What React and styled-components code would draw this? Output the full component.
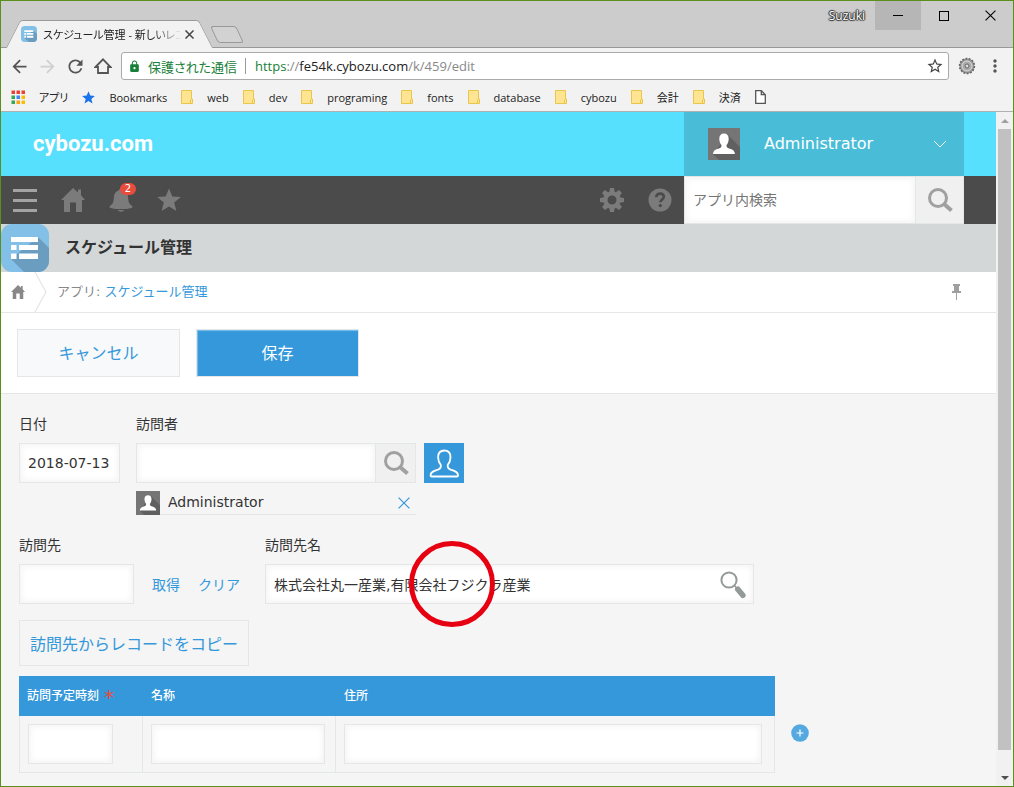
import React from 'react';
import styled, { createGlobalStyle } from 'styled-components';
import {
  MdArrowBack,
  MdArrowForward,
  MdRefresh,
  MdLock,
  MdStarBorder,
  MdMoreVert,
} from 'react-icons/md';

const appFont = '"DejaVu Sans", "Noto Sans CJK JP", sans-serif';
const chromeFont = '"Open Sans", "Noto Sans CJK JP", sans-serif';

const GlobalStyle = createGlobalStyle`
  * {
    box-sizing: border-box;
  }
  body {
    margin: 0;
    font-family: ${appFont};
    font-size: 14px;
    color: #333;
  }
  button, input {
    margin: 0;
    padding: 0;
    border: 0;
    background: none;
    font-family: inherit;
    font-size: inherit;
    color: inherit;
  }
  a {
    color: #3498db;
    text-decoration: none;
  }
  svg {
    display: block;
    flex: none;
  }
`

/* browser window */
const WindowStyled = styled.div`
  display: flex;
  flex-direction: column;
  min-height: 100vh;
  border: 1px solid #5a8f1c;
  background-color: #f2f2f2;
`
const TitleBarStyled = styled.div`
  display: flex;
  height: 47px;
  padding-left: 12px;
  border-bottom: 1px solid #999;
  background-color: #ccc;
  font-family: ${chromeFont};
  font-size: 12px;
`
const TabStyled = styled.div`
  position: relative;
  z-index: 0;
  display: flex;
  align-items: center;
  align-self: flex-end;
  width: 193px;
  height: 28px;
  margin-bottom: -1px;
  padding: 0 12px 0 8px;
  &::before, &::after {
    content: '';
    position: absolute;
    z-index: -1;
    top: 0;
    bottom: 0;
    border-top: 1px solid #999;
    background-color: #f2f2f2;
  }
  &::before {
    left: 0;
    right: 50%;
    border-left: 1px solid #999;
    border-top-left-radius: 3px;
    transform: skewX(-27deg);
  }
  &::after {
    left: 40%;
    right: 0;
    border-right: 1px solid #999;
    border-top-right-radius: 3px;
    transform: skewX(27deg);
  }
`
const TabTitleStyled = styled.span`
  flex: 1;
  overflow: hidden;
  margin: 0 4px 0 6px;
  color: #222;
  font-size: 11px;
  font-feature-settings: 'palt';
  white-space: nowrap;
  mask-image: linear-gradient(to right, #000 80%, transparent);
`
const TabCloseStyled = styled.button`
  color: #444;
`
const NewTabStyled = styled.button`
  align-self: flex-end;
  width: 26px;
  height: 17px;
  margin: 0 0 4px 8px;
  border: 1px solid #999;
  border-radius: 3px;
  background-color: #d2d2d2;
  transform: skewX(25deg);
`
const WindowControlsStyled = styled.div`
  display: flex;
  align-items: flex-start;
  margin-left: auto;
`
const ProfileStyled = styled.span`
  margin-right: 10px;
  color: #fff;
  line-height: 30px;
  text-shadow: 0 0 1px #333, 1px 0 1px #333, -1px 0 1px #333, 0 1px 1px #333, 0 -1px 1px #333;
`
const WindowButtonStyled = styled.button`
  display: flex;
  align-items: center;
  justify-content: center;
  width: 46px;
  height: 29px;
  background-color: ${({ $active }) => ($active ? '#b6b6b6' : 'transparent')};
`
const ToolbarStyled = styled.div`
  display: flex;
  align-items: center;
  gap: 8px;
  padding: 4px 8px 0;
  color: #555;
  font-family: ${chromeFont};
`
const ToolButtonStyled = styled.button`
  display: flex;
  justify-content: center;
  width: 20px;
  color: ${({ $disabled }) => ($disabled ? '#d0d0d0' : '#555')};
`
const AddressStyled = styled.div`
  display: flex;
  flex: 1;
  align-items: center;
  height: 28px;
  padding: 0 4px 0 6px;
  border: 1px solid #aaa;
  border-radius: 3px;
  background-color: #fff;
  color: #888;
  font-size: 13px;
`
const SecureStyled = styled.span`
  display: flex;
  align-items: center;
  gap: 7px;
  height: 16px;
  margin-right: 9px;
  padding-right: 8px;
  border-right: 1px solid #999;
  color: #188038;
  font-feature-settings: 'palt';
`
const UrlStyled = styled.span`
  flex: 1;
  b {
    color: #222;
    font-weight: 400;
  }
  i {
    color: #188038;
    font-style: normal;
  }
`
const BookmarkBarStyled = styled.div`
  display: flex;
  align-items: center;
  gap: 14px;
  height: 32px;
  padding: 3px 10px 0;
  border-bottom: 1px solid #b0b0b0;
  font-family: ${chromeFont};
  font-size: 11px;
`
const BookmarkStyled = styled.a`
  display: flex;
  align-items: center;
  gap: 14px;
  color: #222;
  font-feature-settings: 'palt';
  white-space: nowrap;
`
const ViewportStyled = styled.div`
  display: flex;
  flex: 1;
`
const PageStyled = styled.main`
  display: flex;
  flex: 1;
  flex-direction: column;
  min-width: 0;
`
const ScrollBarStyled = styled.div`
  display: flex;
  flex-direction: column;
  align-items: center;
  width: 17px;
  background-color: #f1f1f1;
`
const ScrollArrowStyled = styled.div`
  display: flex;
  align-items: center;
  justify-content: center;
  height: 17px;
`
const ScrollThumbStyled = styled.div`
  flex: 97;
  width: 13px;
  background-color: #c1c1c1;
`
const ScrollRestStyled = styled.div`
  flex: 3;
`

/* cybozu.com header */
const HeaderStyled = styled.header`
  display: flex;
  align-items: center;
  justify-content: space-between;
  height: 64px;
  padding: 0 32px;
  background-color: #56e0fd;
`
const LogoStyled = styled.a`
  color: #fff;
  font-family: Roboto, sans-serif;
  font-size: 22px;
  font-weight: 700;
  line-height: 28px;
`
const UserMenuStyled = styled.button`
  display: flex;
  align-items: center;
  gap: 24px;
  width: 280px;
  height: 64px;
  padding: 0 16px 0 24px;
  background-color: #49bdd8;
  color: #fff;
  font-size: 16px;
  text-align: left;
`
const UserNameStyled = styled.span`
  flex: 1;
  padding-bottom: 2px;
`
const NavStyled = styled.nav`
  display: flex;
  align-items: center;
  height: 48px;
  padding: 0 32px 0 12px;
  background-color: #4b4b4b;
`
const NavGroupStyled = styled.div`
  display: flex;
  gap: 24px;
  margin-right: ${({ $end }) => ($end ? '12px' : 'auto')};
`
const NavButtonStyled = styled.button`
  position: relative;
  color: #7b7b7b;
`
const BadgeStyled = styled.span`
  position: absolute;
  top: -5px;
  right: -3px;
  width: 16px;
  height: 12px;
  border-radius: 6px;
  background-color: #e74c3c;
  color: #fff;
  font-size: 10px;
  line-height: 12px;
  text-align: center;
`
const NavSearchStyled = styled.form`
  display: flex;
  width: 280px;
  height: 48px;
`
const TextInputStyled = styled.input`
  width: ${({ $width }) => $width || '100%'};
  height: 40px;
  padding: 0 8px;
  border: 1px solid #e3e7e8;
  background-color: #fff;
  box-shadow: inset 2px 2px 6px #f5f5f5, inset -2px -2px 6px #f5f5f5;
  outline: 0;
  &::placeholder {
    color: #757575;
    opacity: 1;
  }
`
const NavInputStyled = styled(TextInputStyled)`
  flex: 1;
  width: auto;
  min-width: 0;
  height: 48px;
`
const SearchButtonStyled = styled.button`
  display: flex;
  align-items: center;
  justify-content: center;
  width: ${({ $size }) => $size};
  height: ${({ $size }) => $size};
  border: 1px solid #e3e7e8;
  border-left: 0;
  background-color: #f0f0f0;
`

/* app title and breadcrumb */
const AppTitleStyled = styled.div`
  display: flex;
  align-items: center;
  gap: 16px;
  height: 48px;
  background-color: #d4d7d7;
`
const AppTitleTextStyled = styled.h1`
  margin: 0;
  font-size: 16px;
  line-height: 24px;
`
const BreadcrumbStyled = styled.div`
  display: flex;
  align-items: center;
  height: 41px;
  padding: 0 35px 0 10px;
  border-bottom: 1px solid #e3e7e8;
  background-color: #fff;
  color: #888;
  font-size: 13px;
`
const BreadcrumbTextStyled = styled.span`
  flex: 1;
  padding: 0 0 3px 10px;
`
const ActionsStyled = styled.div`
  display: flex;
  gap: 16px;
  padding: 16px;
  border-bottom: 1px solid #e3e7e8;
  background-color: #fff;
`
const ActionButtonStyled = styled.button`
  width: 163px;
  height: 48px;
  padding-bottom: 2px;
  border: 1px solid #e3e7e8;
  background-color: ${({ $primary }) => ($primary ? '#3498db' : '#f7f9fa')};
  box-shadow: ${({ $primary }) => ($primary ? 'inset 1px 1px 1px #7cc0ee' : 'none')};
  color: ${({ $primary }) => ($primary ? '#fff' : '#3498db')};
  font-size: 16px;
`

/* record form */
const FormStyled = styled.form`
  flex: 1;
  padding: 20px 18px 13px;
  background-color: #f5f5f5;
`
const FormRowStyled = styled.div`
  display: flex;
  gap: ${({ $gap }) => $gap};
  margin-bottom: ${({ $space }) => $space};
`
const FieldStyled = styled.div`
  position: relative;
`
const LabelStyled = styled.label`
  display: block;
  margin-bottom: 9px;
  line-height: 20px;
`
const ControlRowStyled = styled.div`
  display: flex;
  align-items: center;
`
const LookupLinkStyled = styled.button`
  margin-left: 18px;
  color: #3498db;
`
const PickButtonStyled = styled.button`
  width: 40px;
  height: 40px;
  margin-left: 8px;
  background-color: #3498db;
`
const SelectedUserStyled = styled.div`
  display: flex;
  align-items: center;
  gap: 8px;
  width: 280px;
  height: 24px;
  margin-top: 8px;
  padding-right: 6px;
  border-bottom: 1px solid #e3e7e8;
`
const LookupBoxStyled = styled.div`
  position: relative;
  width: 489px;
`
const LookupIconStyled = styled.button`
  position: absolute;
  top: 6px;
  right: 7px;
`
const MarkerStyled = styled.div`
  position: absolute;
  top: -23px;
  left: 144px;
  width: 86px;
  height: 86px;
  border: 5px solid #e60012;
  border-radius: 50%;
  pointer-events: none;
`
const CopyButtonStyled = styled.button`
  height: 46px;
  margin-bottom: 10px;
  padding: 0 10px;
  border: 1px solid #e3e7e8;
  color: #3498db;
  font-size: 16px;
`
const TableRowStyled = styled.div`
  display: flex;
  align-items: flex-end;
  gap: 16px;
`
const TableStyled = styled.table`
  border-spacing: 0;
  th {
    height: 40px;
    padding: 0 8px;
    background-color: #3498db;
    color: #fff;
    font-size: 12px;
    font-weight: 500;
    line-height: 16px;
    text-align: left;
  }
  td {
    padding: 8px;
    border: 1px solid #e3e7e8;
    border-width: 0 1px 1px 0;
    line-height: 0;
  }
  td:first-child {
    border-left-width: 1px;
  }
`
const HeadCellStyled = styled.th`
  width: ${({ $width }) => $width};
`
const RequiredStyled = styled.span`
  margin-left: 5px;
  color: #e74c3c;
  font-size: 20px;
  vertical-align: -4px;
`
const AddRowStyled = styled.button`
  margin-bottom: 31px;
`

const FolderIcon = () => (
  <svg width="12" height="14" viewBox="0 0 12 14">
    <path d="M.5.5h10v8.5h1v4.500H.5z" fill="#ffe591" stroke="#e9c64b" />
    <path d="M9.500 9.500v4" stroke="#e9c64b" />
  </svg>
)
const AppsIcon = () => (
  <svg width="14" height="14" viewBox="0 0 14 14">
    {['#ea4335', '#ea4335', '#ea4335', '#34a853', '#4285f4', '#fbbc05', '#34a853', '#f9a11b', '#fbbc05'].map((fill, i) => (
      <rect key={i} x={(i % 3) * 5 + 0.5} y={Math.floor(i / 3) * 5 + 0.5} width="3.500" height="3.500" fill={fill} />
    ))}
  </svg>
)
const PageIcon = () => (
  <svg width="11" height="14" viewBox="0 0 11 14" fill="#fff" stroke="#555" strokeWidth="1.300">
    <path d="M.7.7h5.600l4 4v8.600H.7zM6.300.7v4h4" />
  </svg>
)
const ChromeHomeIcon = () => (
  <svg width="18" height="18" viewBox="0 0 18 18" fill="none" stroke="#555" strokeWidth="1.800">
    <path d="M1.500 10L9 2.300 16.500 10H14v6H4v-6z" />
  </svg>
)
const ExtensionIcon = () => (
  <svg width="18" height="18" viewBox="0 0 18 18">
    <circle cx="9" cy="9" r="7.400" fill="#999" stroke="#666" strokeWidth="1.600" strokeDasharray="2 1.300" />
    <circle cx="9" cy="9" r="5" fill="#aaa" stroke="#ddd" />
    <circle cx="9" cy="9" r="2" fill="#ddd" stroke="#666" />
  </svg>
)
const AppIcon = ({ size }) => (
  <svg width={size} height={size} viewBox="0 0 48 48">
    <defs>
      <clipPath id={`app${size}`}><rect width="48" height="48" rx="11" /></clipPath>
    </defs>
    <g clipPath={`url(#app${size})`}>
      <rect width="48" height="48" fill="#82c0e8" />
      <path d="M37 13l11 11v24H23L10 35z" fill="#6b9dc0" />
    </g>
    <path d="M10 13h27v5H10zM10 21h5.500v5H10zM18 21h19v5H18zM10 29.500h5.500v5.500H10zM18 29.500h19v5.500H18z" fill="#fff" />
  </svg>
)
const personPath = 'M16 5.500c3 0 4.700 2 4.700 5.200 0 3-1 5-2.200 6.300 0 2 .3 2.600 2 3.200 3.500 1.200 6.100 1.800 6.500 5.800H5c.4-4 3-4.600 6.500-5.800 1.700-.6 2-1.200 2-3.200-1.200-1.300-2.200-3.300-2.200-6.300 0-3.200 1.700-5.200 4.700-5.200z'
const Avatar = ({ size }) => (
  <svg width={size} height={size} viewBox="0 0 32 32">
    <rect width="32" height="32" fill="#757575" />
    <path d="M20 7l12 12v13H11l-6-6z" fill="#606060" />
    <path d={personPath} fill="#fff" />
  </svg>
)
const PersonOutline = () => (
  <svg width="40" height="40" viewBox="0 0 40 40" fill="none" stroke="#fff" strokeWidth="1.800" strokeLinejoin="round">
    <path d="M20.300 7.500c4 0 6.200 2.600 6.200 6.800 0 3.600-1.200 5.800-2.700 7.600-.5 2.800.2 3.800 2.700 4.700 3.800 1.400 7.600 2 7.600 6 0 .6-.4.900-1 .9H7.500c-.6 0-1-.3-1-.9 0-4 3.800-4.600 7.600-6 2.500-.9 3.200-1.900 2.700-4.700-1.500-1.800-2.700-4-2.700-7.600 0-4.200 2.200-6.800 6.200-6.800z" />
  </svg>
)
const MenuIcon = () => (
  <svg width="24" height="24" viewBox="0 0 24 24" fill="#a3a3a3">
    <path d="M0 1h24v3H0zM0 11h24v3H0zM0 21h24v3H0z" />
  </svg>
)
const HomeIcon = ({ size }) => (
  <svg width={size} height={size} viewBox="0 0 24 24" fill="currentColor">
    <path d="M12 0l5 4.500V1.500h3v5.800L24 12h-3v12h-6v-9.500H9V24H3V12H0z" />
  </svg>
)
const BellIcon = () => (
  <svg width="24" height="24" viewBox="0 0 24 24" fill="currentColor">
    <path d="M12 .5c1.300 0 1.800.8 1.900 1.800 3.300.9 5 3.500 5.200 7 .3 5.200 1 6.700 3.700 8.400 1.100.8.9 1.800-.3 2.200-5.500 1.600-15.500 1.600-21 0-1.200-.4-1.400-1.400-.3-2.200 2.700-1.700 3.400-3.200 3.700-8.400.2-3.500 1.900-6.100 5.200-7C10.200 1.300 10.700.5 12 .5zM8.800 22h6.400c-1.200 2.300-5.200 2.300-6.400 0z" />
  </svg>
)
const StarIcon = ({ size, color = 'currentColor' }) => (
  <svg width={size} height={size} viewBox="0 0 24 24" fill={color}>
    <path d="M12 .5l3.300 8 8.500.6-6.600 5.500 2.200 8.400L12 18.400 4.600 23l2.200-8.400L.2 9.100l8.500-.6z" />
  </svg>
)
const GearIcon = () => (
  <svg width="24" height="24" viewBox="0 0 24 24">
    <circle cx="12" cy="12" r="6.600" fill="none" stroke="currentColor" strokeWidth="4.200" />
    {[0, 45, 90, 135, 180, 225, 270, 315].map((angle) => (
      <path key={angle} d="M10 0h4l.8 5H9.200z" fill="currentColor" transform={`rotate(${angle} 12 12)`} />
    ))}
  </svg>
)
const HelpIcon = () => (
  <svg width="24" height="24" viewBox="0 0 24 24">
    <circle cx="12" cy="12" r="11.500" fill="currentColor" />
    <path d="M8.300 9.300c0-2.400 1.600-3.700 3.800-3.700s3.700 1.300 3.700 3.200c0 2.800-3.400 2.800-3.400 5.400" fill="none" stroke="#4b4b4b" strokeWidth="2.600" />
    <circle cx="12.300" cy="17.600" r="1.700" fill="#4b4b4b" />
  </svg>
)
const SearchIcon = () => (
  <svg width="26" height="26" viewBox="0 0 26 26" fill="none" stroke="#a0a0a0">
    <circle cx="11" cy="11" r="8.500" strokeWidth="3" />
    <path d="M17 17l7.500 6.500" strokeWidth="4" />
  </svg>
)
const LookupIcon = () => (
  <svg width="28" height="29" viewBox="0 0 28 29" fill="none" stroke="#949a98">
    <circle cx="10" cy="10" r="7.600" strokeWidth="2" />
    <path d="M15.500 15.500l2.500 3" strokeWidth="1.500" />
    <path d="M18.800 19.300l5 6" strokeWidth="5.600" strokeLinecap="round" />
  </svg>
)
const PinIcon = () => (
  <svg width="9" height="16" viewBox="0 0 9 16" fill="#a0a0a0">
    <path d="M1 0h7v2H7v5h2v2H5v7H4V9H0V7h2V2H1z" />
  </svg>
)
const CrossIcon = ({ size, color, weight = 1.2 }) => (
  <svg width={size} height={size} viewBox="0 0 12 12" stroke={color} strokeWidth={weight}>
    <path d="M.6.6l10.800 10.800M11.400.6L.6 11.400" />
  </svg>
)

const bookmarks = [
  { icon: <AppsIcon />, name: 'アプリ' },
  { icon: <StarIcon size={13} color="#1a73e8" />, name: 'Bookmarks' },
  { icon: <FolderIcon />, name: 'web' },
  { icon: <FolderIcon />, name: 'dev' },
  { icon: <FolderIcon />, name: 'programing' },
  { icon: <FolderIcon />, name: 'fonts' },
  { icon: <FolderIcon />, name: 'database' },
  { icon: <FolderIcon />, name: 'cybozu' },
  { icon: <FolderIcon />, name: '会計' },
  { icon: <FolderIcon />, name: '決済' },
]

const BrowserChrome = () => (
  <>
    <TitleBarStyled>
      <TabStyled>
        <AppIcon size={16} />
        <TabTitleStyled>スケジュール管理 - 新しいレコ</TabTitleStyled>
        <TabCloseStyled type="button" aria-label="タブを閉じる"><CrossIcon size={9} color="#444" weight={2} /></TabCloseStyled>
      </TabStyled>
      <NewTabStyled type="button" aria-label="新しいタブ" />
      <WindowControlsStyled>
        <ProfileStyled>Suzuki</ProfileStyled>
        <WindowButtonStyled type="button" aria-label="最小化" $active>
          <svg width="10" height="1"><rect width="10" height="1" /></svg>
        </WindowButtonStyled>
        <WindowButtonStyled type="button" aria-label="最大化">
          <svg width="10" height="10"><rect x=".5" y=".5" width="9" height="9" fill="none" stroke="#000" /></svg>
        </WindowButtonStyled>
        <WindowButtonStyled type="button" aria-label="閉じる"><CrossIcon size={11} color="#000" /></WindowButtonStyled>
      </WindowControlsStyled>
    </TitleBarStyled>
    <ToolbarStyled>
      <ToolButtonStyled type="button" aria-label="戻る"><MdArrowBack size={21} /></ToolButtonStyled>
      <ToolButtonStyled type="button" aria-label="進む" $disabled><MdArrowForward size={21} /></ToolButtonStyled>
      <ToolButtonStyled type="button" aria-label="再読み込み"><MdRefresh size={21} /></ToolButtonStyled>
      <ToolButtonStyled type="button" aria-label="ホーム"><ChromeHomeIcon /></ToolButtonStyled>
      <AddressStyled>
        <SecureStyled><MdLock size={13} />保護された通信</SecureStyled>
        <UrlStyled><i>https</i>://<b>fe54k.cybozu.com</b>/k/459/edit</UrlStyled>
        <MdStarBorder size={18} color="#444" />
      </AddressStyled>
      <ToolButtonStyled type="button" aria-label="拡張機能"><ExtensionIcon /></ToolButtonStyled>
      <ToolButtonStyled type="button" aria-label="メニュー"><MdMoreVert size={20} /></ToolButtonStyled>
    </ToolbarStyled>
    <BookmarkBarStyled>
      {bookmarks.map(({ icon, name }) => (
        <BookmarkStyled href="#" key={name}>{icon}{name}</BookmarkStyled>
      ))}
      <BookmarkStyled href="#" aria-label="ページ"><PageIcon /></BookmarkStyled>
    </BookmarkBarStyled>
  </>
)

const RecordForm = () => (
  <FormStyled>
    <FormRowStyled $gap="16px" $space="20px">
      <FieldStyled>
        <LabelStyled htmlFor="date">日付</LabelStyled>
        <TextInputStyled id="date" $width="101px" defaultValue="2018-07-13" />
      </FieldStyled>
      <FieldStyled>
        <LabelStyled htmlFor="visitor">訪問者</LabelStyled>
        <ControlRowStyled>
          <TextInputStyled id="visitor" $width="240px" />
          <SearchButtonStyled type="button" aria-label="検索" $size="40px"><SearchIcon /></SearchButtonStyled>
          <PickButtonStyled type="button" aria-label="ユーザーを選択"><PersonOutline /></PickButtonStyled>
        </ControlRowStyled>
        <SelectedUserStyled>
          <Avatar size={24} />
          <UserNameStyled>Administrator</UserNameStyled>
          <button type="button" aria-label="削除"><CrossIcon size={12} color="#3498db" /></button>
        </SelectedUserStyled>
      </FieldStyled>
    </FormRowStyled>
    <FormRowStyled $gap="25px" $space="16px">
      <FieldStyled>
        <LabelStyled htmlFor="customer">訪問先</LabelStyled>
        <ControlRowStyled>
          <TextInputStyled id="customer" $width="115px" />
          <LookupLinkStyled type="button">取得</LookupLinkStyled>
          <LookupLinkStyled type="button">クリア</LookupLinkStyled>
        </ControlRowStyled>
      </FieldStyled>
      <FieldStyled>
        <LabelStyled htmlFor="customerName">訪問先名</LabelStyled>
        <LookupBoxStyled>
          <TextInputStyled id="customerName" defaultValue="株式会社丸一産業,有限会社フジクラ産業" />
          <LookupIconStyled type="button" aria-label="訪問先を検索"><LookupIcon /></LookupIconStyled>
          <MarkerStyled />
        </LookupBoxStyled>
      </FieldStyled>
    </FormRowStyled>
    <CopyButtonStyled type="button">訪問先からレコードをコピー</CopyButtonStyled>
    <TableRowStyled>
      <TableStyled>
        <thead>
          <tr>
            <HeadCellStyled $width="124px">訪問予定時刻<RequiredStyled>*</RequiredStyled></HeadCellStyled>
            <HeadCellStyled $width="193px">名称</HeadCellStyled>
            <HeadCellStyled $width="439px">住所</HeadCellStyled>
          </tr>
        </thead>
        <tbody>
          <tr>
            <td><TextInputStyled aria-label="訪問予定時刻" $width="85px" /></td>
            <td><TextInputStyled aria-label="名称" $width="174px" /></td>
            <td><TextInputStyled aria-label="住所" $width="418px" /></td>
          </tr>
        </tbody>
      </TableStyled>
      <AddRowStyled type="button" aria-label="行を追加">
        <svg width="18" height="18" viewBox="0 0 18 18">
          <circle cx="9" cy="9" r="8.800" fill="#54a9e1" />
          <path d="M5.500 9h7M9 5.500v7" stroke="#fff" strokeWidth="1.200" />
        </svg>
      </AddRowStyled>
    </TableRowStyled>
  </FormStyled>
)

const App = () => {
  return (
    <WindowStyled>
      <GlobalStyle />
      <BrowserChrome />
      <ViewportStyled>
        <PageStyled>
          <HeaderStyled>
            <LogoStyled href="#">cybozu.com</LogoStyled>
            <UserMenuStyled type="button">
              <Avatar size={32} />
              <UserNameStyled>Administrator</UserNameStyled>
              <svg width="16" height="10" viewBox="0 0 16 10" fill="none" stroke="#fff">
                <path d="M2 2l6 6 6-6" />
              </svg>
            </UserMenuStyled>
          </HeaderStyled>
          <NavStyled>
            <NavGroupStyled>
              <NavButtonStyled type="button" aria-label="メニュー"><MenuIcon /></NavButtonStyled>
              <NavButtonStyled type="button" aria-label="ホーム"><HomeIcon size={24} /></NavButtonStyled>
              <NavButtonStyled type="button" aria-label="通知"><BellIcon /><BadgeStyled>2</BadgeStyled></NavButtonStyled>
              <NavButtonStyled type="button" aria-label="お気に入り"><StarIcon size={24} /></NavButtonStyled>
            </NavGroupStyled>
            <NavGroupStyled $end>
              <NavButtonStyled type="button" aria-label="設定"><GearIcon /></NavButtonStyled>
              <NavButtonStyled type="button" aria-label="ヘルプ"><HelpIcon /></NavButtonStyled>
            </NavGroupStyled>
            <NavSearchStyled>
              <NavInputStyled aria-label="アプリ内検索" placeholder="アプリ内検索" />
              <SearchButtonStyled type="button" aria-label="検索" $size="48px"><SearchIcon /></SearchButtonStyled>
            </NavSearchStyled>
          </NavStyled>
          <AppTitleStyled>
            <AppIcon size={48} />
            <AppTitleTextStyled>スケジュール管理</AppTitleTextStyled>
          </AppTitleStyled>
          <BreadcrumbStyled>
            <HomeIcon size={14} />
            <svg width="22" height="40" viewBox="0 0 22 40" fill="none" stroke="#e3e7e8" strokeWidth="1.300">
              <path d="M10 0l11 20-11 20" />
            </svg>
            <BreadcrumbTextStyled>アプリ: <a href="#">スケジュール管理</a></BreadcrumbTextStyled>
            <PinIcon />
          </BreadcrumbStyled>
          <ActionsStyled>
            <ActionButtonStyled type="button">キャンセル</ActionButtonStyled>
            <ActionButtonStyled type="button" $primary>保存</ActionButtonStyled>
          </ActionsStyled>
          <RecordForm />
        </PageStyled>
        <ScrollBarStyled>
          <ScrollArrowStyled>
            <svg width="8" height="4" viewBox="0 0 8 4"><path d="M0 4l4-4 4 4z" fill="#a0a0a0" /></svg>
          </ScrollArrowStyled>
          <ScrollThumbStyled />
          <ScrollRestStyled />
          <ScrollArrowStyled>
            <svg width="8" height="4" viewBox="0 0 8 4"><path d="M0 0l4 4 4-4z" fill="#505050" /></svg>
          </ScrollArrowStyled>
        </ScrollBarStyled>
      </ViewportStyled>
    </WindowStyled>
  )
}

export default App
